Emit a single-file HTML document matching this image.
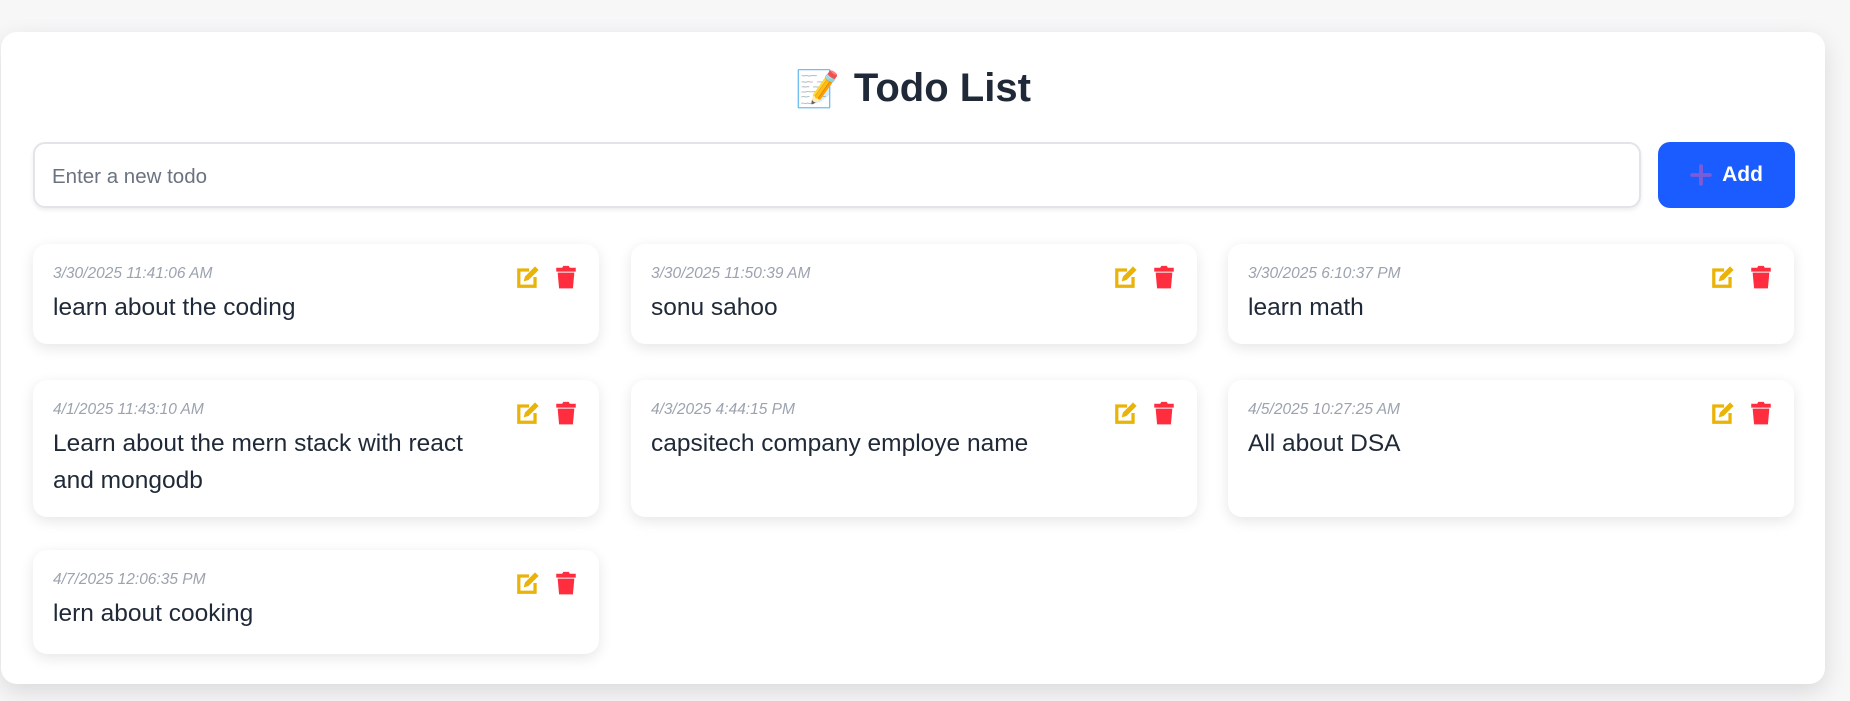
<!DOCTYPE html>
<html><head><meta charset="utf-8"><style>
*{box-sizing:border-box;margin:0;padding:0}
body{width:1850px;height:701px;background:#f7f7f8;font-family:"Liberation Sans",sans-serif;overflow:hidden;position:relative}
.wrap{position:absolute;left:1px;top:32px;width:1824px;height:652px;background:#fff;border-radius:16px;box-shadow:0 8px 24px rgba(0,0,0,.12)}
h1{position:absolute;left:0;right:0;top:32px;text-align:center;font-size:40px;font-weight:bold;color:#1f2937;line-height:48px}
h1 .em{font-size:36px;margin-right:14px;font-family:"Noto Color Emoji","DejaVu Sans",sans-serif}
.inp{position:absolute;left:32px;top:110px;width:1608px;height:66px;border:2px solid #e2e4e8;border-radius:12px;box-shadow:0 2px 4px rgba(0,0,0,.08);font-size:20.5px;color:#6b7280;padding:21px 17px;line-height:24px}
.btn{position:absolute;left:1657px;top:110px;width:137px;height:66px;background:#1a5cff;border-radius:12px;color:#fff;font-weight:bold;font-size:21px;display:flex;align-items:center;justify-content:center;gap:10px}
.card{position:absolute;width:566px;background:#fff;border-radius:14px;box-shadow:0 4px 14px rgba(0,0,0,.10);padding:20px}
.d{font-style:italic;font-size:15.5px;color:#9ca3af;line-height:20px}
.t{font-size:24.5px;color:#1f2937;line-height:37px;margin-top:5px;width:430px}
.ic{position:absolute;right:20px;top:20px;display:flex;gap:12px}
</style></head><body>
<div class="wrap">
<h1><span class="em">📝</span>Todo List</h1>
<div class="inp">Enter a new todo</div>
<div class="btn"><svg width="22" height="22" viewBox="0 0 20 20"><path d="M10 2v16M2 10h16" stroke="#7c5cd6" stroke-width="3.5" stroke-linecap="round"/></svg>Add</div>
</div>
<svg width="0" height="0" style="position:absolute"><defs>
<symbol id="e" viewBox="0 0 24 24"><path d="M2 4h11v3H5v12h12v-7h3v10H2z" fill="#eab308"/><path d="M8 16l1.2-4.5L18.5 2.2l3.3 3.3-9.3 9.3z" fill="#eab308"/></symbol>
<symbol id="tr" viewBox="0 0 24 24"><path d="M3 3.5h5.5l1-1.8h5l1 1.8H21v3.5H3z" fill="#ff2d3d"/><path d="M4.3 8h15.4l-1.3 14.5H5.6z" fill="#ff2d3d"/></symbol></defs></svg>
<div class="card" style="left:33px;top:244px;height:100px"><div class="d">3/30/2025 11:41:06 AM</div><div class="t">learn about the coding</div><div class="ic"><svg width="26" height="26"><use href="#e"/></svg><svg width="26" height="26"><use href="#tr"/></svg></div></div>
<div class="card" style="left:631px;top:244px;height:100px"><div class="d">3/30/2025 11:50:39 AM</div><div class="t">sonu sahoo</div><div class="ic"><svg width="26" height="26"><use href="#e"/></svg><svg width="26" height="26"><use href="#tr"/></svg></div></div>
<div class="card" style="left:1228px;top:244px;height:100px"><div class="d">3/30/2025 6:10:37 PM</div><div class="t">learn math</div><div class="ic"><svg width="26" height="26"><use href="#e"/></svg><svg width="26" height="26"><use href="#tr"/></svg></div></div>
<div class="card" style="left:33px;top:380px;height:137px"><div class="d">4/1/2025 11:43:10 AM</div><div class="t">Learn about the mern stack with react and mongodb</div><div class="ic"><svg width="26" height="26"><use href="#e"/></svg><svg width="26" height="26"><use href="#tr"/></svg></div></div>
<div class="card" style="left:631px;top:380px;height:137px"><div class="d">4/3/2025 4:44:15 PM</div><div class="t">capsitech company employe name</div><div class="ic"><svg width="26" height="26"><use href="#e"/></svg><svg width="26" height="26"><use href="#tr"/></svg></div></div>
<div class="card" style="left:1228px;top:380px;height:137px"><div class="d">4/5/2025 10:27:25 AM</div><div class="t">All about DSA</div><div class="ic"><svg width="26" height="26"><use href="#e"/></svg><svg width="26" height="26"><use href="#tr"/></svg></div></div>
<div class="card" style="left:33px;top:550px;height:104px"><div class="d">4/7/2025 12:06:35 PM</div><div class="t">lern about cooking</div><div class="ic"><svg width="26" height="26"><use href="#e"/></svg><svg width="26" height="26"><use href="#tr"/></svg></div></div>
</body></html>
